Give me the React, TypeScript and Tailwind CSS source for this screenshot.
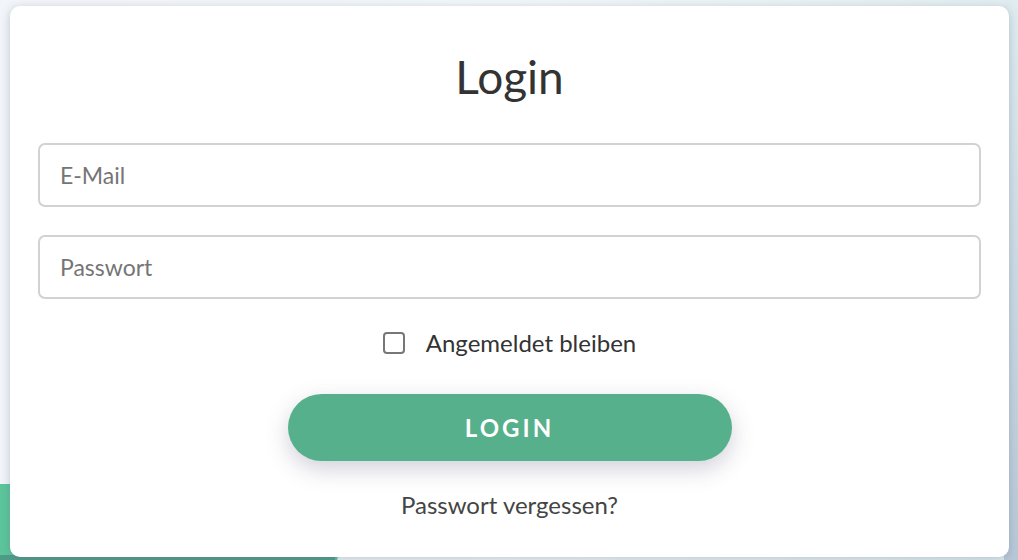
import { useState } from 'react'

export default function App() {
  const [remember, setRemember] = useState(false)

  return (
    <div className="relative h-[560px] w-[1018px] overflow-hidden bg-gradient-to-r from-[#f2f5f9] via-[#f3f7f9] to-[#e2eef0] font-['Lato',sans-serif]">
      {/* decorative background shapes */}
      <div className="absolute bottom-[-40px] left-[-60px] h-[116px] w-[400px] rounded-[60px] bg-[#5cc59b]" />
      <div className="absolute bottom-0 left-0 h-[5px] w-[335px] bg-[#4e9c87]" />
      <div className="absolute right-0 top-0 h-full w-[14px] bg-gradient-to-b from-[#e0ecef] to-[#b9c8d6]" />

      <div className="relative ml-[10px] mt-[6px] flex h-[551px] w-[999px] flex-col items-center rounded-[10px] bg-white px-[28px] shadow-[0_2px_10px_rgba(90,110,140,0.35)]">
        <h1 className="mt-[45px] text-[46px] leading-[52px] text-[#333]">Login</h1>

        <input
          type="email"
          placeholder="E-Mail"
          className="mt-[40px] h-[64px] w-full rounded-[7px] border-2 border-[#d2d2d2] px-[20px] text-[23px] text-[#333] placeholder:text-[#757575] outline-none"
        />
        <input
          type="password"
          placeholder="Passwort"
          className="mt-[28px] h-[64px] w-full rounded-[7px] border-2 border-[#d2d2d2] px-[20px] text-[23px] text-[#333] placeholder:text-[#757575] outline-none"
        />

        <label className="mt-[29px] flex cursor-pointer items-center gap-[21px]">
          <span
            onClick={() => setRemember(!remember)}
            className={`h-[22px] w-[22px] rounded-[4px] border-2 border-[#777] ${remember ? 'bg-[#55b08b]' : 'bg-white'}`}
          />
          <span className="text-[24px] leading-[30px] text-[#333]">Angemeldet bleiben</span>
        </label>

        <button
          type="submit"
          className="mt-[36px] h-[67px] w-[444px] rounded-full bg-[#55b08b] text-[24px] font-bold tracking-[3px] text-white shadow-[0_8px_22px_rgba(70,70,110,0.25)]"
        >
          LOGIN
        </button>

        <a href="#" className="mt-[29px] text-[24px] leading-[30px] text-[#444]">
          Passwort vergessen?
        </a>
      </div>
    </div>
  )
}
